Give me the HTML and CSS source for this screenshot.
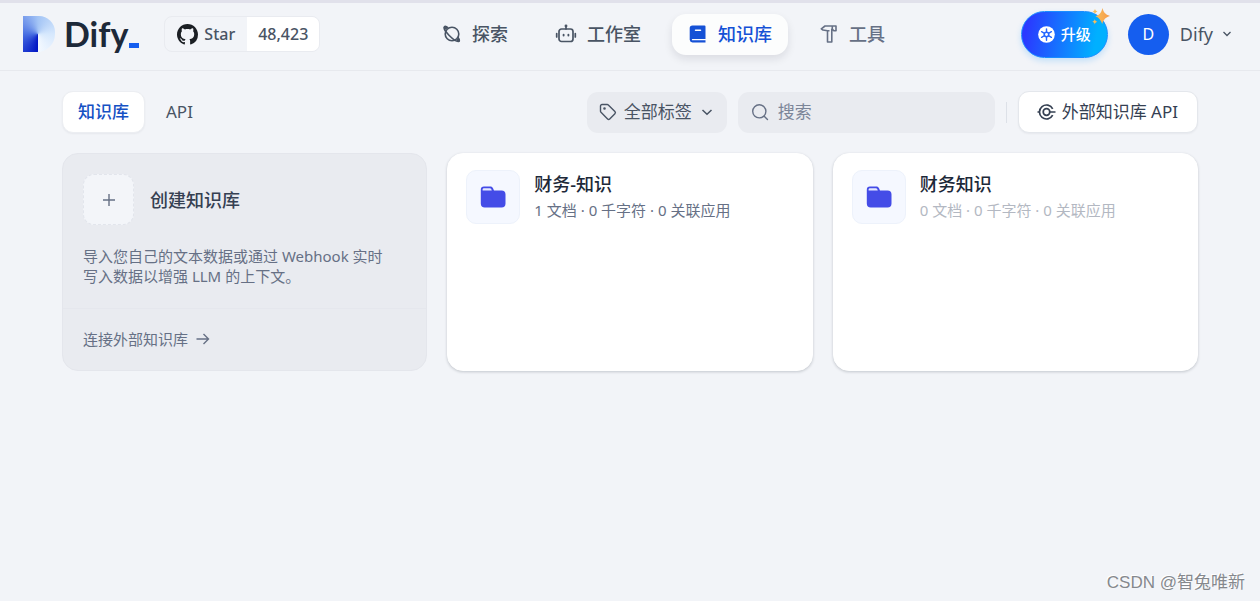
FILE: index.html
```html
<!DOCTYPE html>
<html lang="zh-CN">
<head>
<meta charset="utf-8">
<meta name="viewport" content="width=device-width, initial-scale=1">
<title>知识库 - Dify</title>
<link rel="stylesheet" href="styles.css">
</head>
<body>
<header class="header">
  <div class="brand">
    <a class="logo" href="#" aria-label="Dify">
      <span class="logo-mark"></span>
      <span class="logo-text">Dify</span>
      <span class="logo-bar"></span>
    </a>
    <a class="github" href="#">
      <span class="github-star">
        <svg width="21" height="21" viewBox="0 0 16 16" fill="#1b1f24"><path d="M8 0C3.58 0 0 3.58 0 8c0 3.54 2.29 6.53 5.47 7.59.4.07.55-.17.55-.38 0-.19-.01-.82-.01-1.49-2.01.37-2.53-.49-2.69-.94-.09-.23-.48-.94-.82-1.13-.28-.15-.68-.52-.01-.53.63-.01 1.08.58 1.23.82.72 1.21 1.87.87 2.33.66.07-.52.28-.87.51-1.07-1.78-.2-3.64-.89-3.64-3.95 0-.87.31-1.59.82-2.15-.08-.2-.36-1.02.08-2.12 0 0 .67-.21 2.2.82.64-.18 1.32-.27 2-.27.68 0 1.36.09 2 .27 1.53-1.04 2.2-.82 2.2-.82.44 1.1.16 1.92.08 2.12.51.56.82 1.27.82 2.15 0 3.07-1.87 3.75-3.65 3.95.29.25.54.73.54 1.48 0 1.07-.01 1.93-.01 2.2 0 .21.15.46.55.38A8.013 8.013 0 0016 8c0-4.42-3.58-8-8-8z"/></svg>
        Star
      </span>
      <span class="github-count">48,423</span>
    </a>
  </div>

  <nav class="nav">
    <a class="nav-item" href="#">
      <svg width="20" height="20" viewBox="0 0 20 20" fill="none" stroke="currentColor" stroke-width="1.6"><circle cx="10" cy="10" r="6.800"/><path d="M6.200 3.800C4.300 2.300 2.900 2.200 2.400 2.800c-1 1.100 1.200 5 4.600 8.500s7.500 6.400 9.500 6.200c1.200-.1 1-2-.6-4.300"/><circle cx="3.500" cy="3.700" r=".9"/><circle cx="16.400" cy="16.300" r=".9"/></svg>
      探索
    </a>
    <a class="nav-item" href="#">
      <svg width="22" height="20" viewBox="0 0 22 20" fill="none" stroke="currentColor" stroke-width="1.700" stroke-linecap="round"><rect x="4" y="5" width="14" height="12.500" rx="2.500"/><path d="M11 5V1.800M1.700 9.500v3.500M20.300 9.500v3.500"/><circle cx="11" cy="1.900" r=".6"/><path d="M8.600 10.800v.7M13.400 10.800v.7" stroke-width="1.900"/></svg>
      工作室
    </a>
    <a class="nav-item nav-item-active" href="#" aria-current="page">
      <svg width="20" height="20" viewBox="0 0 20 20"><path fill="currentColor" d="M4.500 1.500h12a1 1 0 0 1 1 1V18.500h-13A3 3 0 0 1 1.700 15.800V4.300a2.800 2.800 0 0 1 2.800-2.800z"/><path stroke="#fff" stroke-width="1.500" stroke-linecap="round" d="M7.500 6.300h5"/><path stroke="#fff" stroke-width="1.300" stroke-linecap="round" d="M4.500 15.700h13"/></svg>
      知识库
    </a>
    <a class="nav-item nav-item-muted" href="#">
      <svg width="20" height="20" viewBox="0 0 20 20" fill="none" stroke="currentColor" stroke-width="1.600" stroke-linejoin="round"><path d="M6 2h11v4.700h-2.200l-1.500-1.400h-.5V18H8.500V6.700L4 6 2.300 4.800z"/><path d="M13.300 2v3.500M8.500 6.700h2"/></svg>
      工具
    </a>
  </nav>

  <div class="account">
    <button class="upgrade" type="button">
      <svg width="17" height="17" viewBox="0 0 18 18"><circle cx="9" cy="9" r="8.800" fill="#fff"/><circle cx="9" cy="9" r="3.200" fill="#2466ff"/><path d="M9 3v3M9 12v3M3.800 6l2.600 1.500M11.600 10.500l2.600 1.500M3.800 12l2.600-1.500M11.600 7.500 14.200 6" stroke="#2466ff" stroke-width="1.500" stroke-linecap="round"/><circle cx="9" cy="9" r="1.500" fill="#fff"/></svg>
      升级
      <svg class="sparkle" width="18" height="18" viewBox="0 0 18 18"><defs><linearGradient id="gold" x2="1"><stop stop-color="#f6c45c"/><stop offset="1" stop-color="#f79b4b"/></linearGradient></defs><path fill="url(#gold)" d="M10.500 0c1 4 2.600 6.500 7.500 7.900-4.500 1.400-6.400 3.500-7.800 8.100C8.700 12 7.200 9.700 3.500 8.300 7.900 6.700 9.300 4.500 10.500 0zM3 .8c.3 1.500.8 2.300 2.500 2.700C3.900 4 3.300 4.700 3 6.200 2.600 4.700 2 4 .5 3.600 2.100 3.100 2.700 2.300 3 .8zM2.800 11c.3 1.500.9 2.300 2.500 2.700-1.500.4-2.200 1.200-2.500 2.700-.4-1.500-1-2.200-2.500-2.600 1.600-.5 2.200-1.300 2.500-2.800z"/></svg>
    </button>
    <button class="user" type="button">
      <span class="avatar">D</span>
      Dify
      <svg width="10" height="10" viewBox="0 0 10 10" fill="none" stroke="currentColor" stroke-width="1.300"><path d="m1.500 3 3.500 3.500L8.500 3"/></svg>
    </button>
  </div>
</header>

<main class="main">
  <div class="toolbar">
    <div class="tabs" role="tablist">
      <button class="tab tab-active" type="button" role="tab" aria-selected="true">知识库</button>
      <button class="tab" type="button" role="tab" aria-selected="false">API</button>
    </div>
    <div class="tools">
      <button class="tag-filter" type="button">
        <svg width="18" height="18" viewBox="0 0 18 18" fill="none" stroke="currentColor" stroke-width="1.400" stroke-linejoin="round"><path d="M1.500 3a1.500 1.500 0 0 1 1.500-1.500h5.200c.4 0 .8.200 1.100.5l6.600 6.600a1.500 1.500 0 0 1 0 2.100l-5.200 5.200a1.500 1.500 0 0 1-2.100 0L2 9.300c-.3-.3-.5-.7-.5-1.100z"/><circle cx="5.500" cy="5.500" r=".6" fill="currentColor"/></svg>
        全部标签
        <svg class="tag-arrow" width="12" height="12" viewBox="0 0 12 12" fill="none" stroke="currentColor" stroke-width="1.500"><path d="m1.500 4 4.500 4.300L10.500 4"/></svg>
      </button>
      <label class="search">
        <svg width="18" height="18" viewBox="0 0 18 18" fill="none" stroke="currentColor" stroke-width="1.400" stroke-linecap="round"><circle cx="8.300" cy="8.300" r="6.600"/><path d="m13.200 13.200 3.300 3.300"/></svg>
        <input class="search-input" type="text" placeholder="搜索" aria-label="搜索">
      </label>
      <span class="divider"></span>
      <button class="external" type="button">
        <svg width="19" height="18" viewBox="0 0 19 18" fill="none" stroke="currentColor" stroke-width="1.700"><circle cx="9.500" cy="9" r="3.300"/><path d="M.5 9h2M12.800 9h5.700M15.700 5.800a7 7 0 1 0 0 6.400"/></svg>
        外部知识库 API
      </button>
    </div>
  </div>

  <div class="grid">
    <section class="create">
      <a class="create-top" href="#">
        <span class="create-head">
          <span class="create-plus"><svg width="14" height="14" viewBox="0 0 14 14" stroke="currentColor" stroke-width="1.400"><path d="M7 1v12M1 7h12"/></svg></span>
          <span class="create-title">创建知识库</span>
        </span>
        <span class="create-text">导入您自己的文本数据或通过 Webhook 实时写入数据以增强 LLM 的上下文。</span>
      </a>
      <a class="connect" href="#">
        连接外部知识库
        <svg width="14" height="14" viewBox="0 0 14 14" fill="none" stroke="currentColor" stroke-width="1.400"><path d="M.5 7h12M7.500 2l5 5-5 5"/></svg>
      </a>
    </section>

    <a class="card" href="#">
      <span class="card-icon"><svg width="26" height="24" viewBox="0 0 26 24"><path fill="#444ce7" d="M4 1.500h6.300c1.200 0 2.200.6 2.700 1.700l1 2.200h7.500a4 4 0 0 1 4 4v9.200a4 4 0 0 1-4 4H4.800a4 4 0 0 1-4-4V4.700A3.200 3.200 0 0 1 4 1.500z"/><path fill="#e4e8ff" d="M4 3.200h5.800c.7 0 1.200.3 1.400.9l.6 1.300H2.600v-.8C2.600 3.800 3.200 3.200 4 3.200z"/></svg></span>
      <span class="card-info">
        <span class="card-title">财务-知识</span>
        <span class="card-meta">1 文档 · 0 千字符 · 0 关联应用</span>
      </span>
    </a>

    <a class="card" href="#">
      <span class="card-icon"><svg width="26" height="24" viewBox="0 0 26 24"><path fill="#444ce7" d="M4 1.500h6.300c1.200 0 2.200.6 2.700 1.700l1 2.200h7.500a4 4 0 0 1 4 4v9.200a4 4 0 0 1-4 4H4.800a4 4 0 0 1-4-4V4.700A3.200 3.200 0 0 1 4 1.500z"/><path fill="#e4e8ff" d="M4 3.200h5.800c.7 0 1.200.3 1.400.9l.6 1.300H2.600v-.8C2.600 3.800 3.200 3.200 4 3.200z"/></svg></span>
      <span class="card-info">
        <span class="card-title">财务知识</span>
        <span class="card-meta card-meta-empty">0 文档 · 0 千字符 · 0 关联应用</span>
      </span>
    </a>
  </div>
</main>
<footer class="watermark">CSDN @智兔唯新</footer>
</body>
</html>
```
FILE: styles.css
```css
* {
  box-sizing: border-box;
}

body {
  margin: 0;
  min-height: 100vh;
  display: flex;
  flex-direction: column;
  background: #f2f4f8;
  color: #495464;
  font-family: "Noto Sans", "Noto Sans CJK SC", sans-serif;
  font-size: 17px;
  line-height: 24px;
}

a {
  color: inherit;
  text-decoration: none;
}

button,
input {
  margin: 0;
  padding: 0;
  border: 0;
  background: none;
  color: inherit;
  font: inherit;
}

svg {
  flex: none;
}

/* Header */
.header {
  display: flex;
  align-items: center;
  justify-content: space-between;
  height: 71px;
  padding: 0 28px 5px 23px;
  border-top: 3px solid #e1e1eb;
  border-bottom: 1px solid #e7e9ee;
}

.brand,
.logo,
.github,
.github-star,
.nav,
.nav-item,
.account,
.user {
  display: flex;
  align-items: center;
}

.brand {
  gap: 25px;
}

.logo-mark {
  width: 32px;
  height: 36px;
  margin-right: 9px;
  border-radius: 0 16px 18px 0;
  background: conic-gradient(from 180deg at 15px 18px, #0014c4, #4a70e2 90deg, #a3c4f5 180deg, #d6e8fd 270deg, #f4f9ff);
}

.logo-text {
  color: #1d2939;
  font-family: Lato, sans-serif;
  font-size: 34px;
  font-weight: 700;
  line-height: 36px;
}

.logo-bar {
  align-self: flex-end;
  width: 10px;
  height: 5px;
  margin: 0 0 4px 1px;
  background: #155eef;
}

.github {
  height: 36px;
  overflow: hidden;
  border: 1px solid #e9ebf0;
  border-radius: 8px;
  font-size: 16px;
  font-weight: 500;
}

.github-star {
  gap: 6px;
  padding: 0 12px;
}

.github-count {
  padding: 5px 11px;
  background: #fff;
}

.nav {
  gap: 15px;
  margin-right: 14px;
}

.nav-item {
  gap: 10px;
  height: 41px;
  padding: 0 16px;
  border-radius: 14px;
  font-size: 18px;
  font-weight: 500;
}

.nav-item-active {
  background: #fcfdfd;
  box-shadow: 0 4px 8px #1018281a;
  color: #1551d6;
}

.nav-item-muted {
  color: #667085;
}

.account {
  gap: 20px;
}

.upgrade {
  position: relative;
  display: flex;
  align-items: center;
  gap: 6px;
  height: 47px;
  padding: 0 16px;
  border: 1px solid #1a8dff;
  border-radius: 24px;
  background: linear-gradient(100deg, #2a3aff 8%, #00b0ff 85%);
  box-shadow: 0 3px 6px #0090ff33;
  color: #fff;
  font-size: 15px;
  font-weight: 500;
}

.sparkle {
  position: absolute;
  top: -4px;
  right: -3px;
}

.user {
  gap: 9px;
  font-size: 18px;
}

.avatar {
  width: 41px;
  margin-right: 2px;
  border-radius: 50%;
  background: #155eef;
  color: #fff;
  font-size: 16px;
  line-height: 41px;
}

/* Toolbar */
.main {
  flex: 1;
  padding: 20px 62px;
}

.toolbar {
  display: flex;
  justify-content: space-between;
  margin-bottom: 20px;
}

.tabs,
.tools {
  display: flex;
  align-items: center;
  gap: 5px;
}

.tools {
  gap: 11px;
}

.tab {
  height: 42px;
  padding: 0 15px;
  border: 1px solid transparent;
  border-radius: 11px;
}

.tab-active {
  border-color: #eceef2;
  background: #fff;
  box-shadow: 0 1px 2px #1018280d;
  color: #1551c4;
  font-weight: 500;
}

.tag-filter,
.search,
.external {
  display: flex;
  align-items: center;
  height: 41px;
  border-radius: 11px;
}

.tag-filter {
  gap: 7px;
  padding: 0 14px 0 12px;
  background: #e9ebf0;
}

.tag-arrow {
  margin-left: 2px;
}

.search {
  gap: 9px;
  width: 257px;
  padding: 0 13px;
  background: #e9ebf0;
  color: #667085;
}

.search-input {
  flex: 1;
  min-width: 0;
  outline: 0;
}

.search-input::placeholder {
  color: #7c8699;
  opacity: 1;
}

.divider {
  width: 1px;
  height: 21px;
  background: #dde1e8;
}

.external {
  gap: 6px;
  height: 42px;
  padding: 0 19px 0 18px;
  border: 1px solid #e4e7ec;
  background: #fff;
  box-shadow: 0 1px 2px #1018280d;
  color: #354052;
}

/* Cards */
.grid {
  display: grid;
  grid-template-columns: repeat(3, 1fr);
  gap: 20px;
}

.create,
.card {
  min-height: 218px;
  border-radius: 16px;
}

.create {
  display: flex;
  flex-direction: column;
  border: 1px solid #e4e6ec;
  background: #e9ebf0;
  color: #667085;
  font-size: 15px;
}

.create-top {
  flex: 1;
  display: flex;
  flex-direction: column;
  gap: 21px;
  padding: 20px 32px 0 20px;
}

.create-head {
  display: flex;
  align-items: center;
  gap: 16px;
}

.create-plus {
  display: grid;
  place-items: center;
  width: 51px;
  height: 51px;
  border: 1px dashed #e2e5ec;
  border-radius: 11px;
  background: #f3f5f9;
}

.create-title {
  color: #354052;
  font-size: 18px;
  font-weight: 500;
}

.create-text {
  line-height: 20px;
}

.connect {
  display: flex;
  align-items: center;
  gap: 8px;
  padding: 18px 20px 19px;
  border-top: 1px solid #e5e7ed;
}

.card {
  display: flex;
  align-items: flex-start;
  gap: 14px;
  padding: 16px 18px;
  border: 1px solid #fff;
  background: #fff;
  box-shadow: 0 1px 3px #10182833;
}

.card-icon {
  display: grid;
  place-items: center;
  width: 54px;
  height: 54px;
  border: 1px solid #edf2fb;
  border-radius: 10px;
  background: #f5f8ff;
}

.card-info {
  display: flex;
  flex-direction: column;
}

.card-title {
  color: #1d2939;
  font-size: 18px;
  font-weight: 500;
  line-height: 28px;
}

.card-meta {
  color: #667085;
  font-size: 15px;
}

.card-meta-empty {
  color: #b3b8c2;
}

.watermark {
  align-self: flex-end;
  padding: 0 15px 6px;
  color: #85888d;
  font-family: "Liberation Sans", "Noto Sans CJK SC", sans-serif;
  font-size: 17px;
  text-shadow: -1px -1px 0 #fff;
}
```
